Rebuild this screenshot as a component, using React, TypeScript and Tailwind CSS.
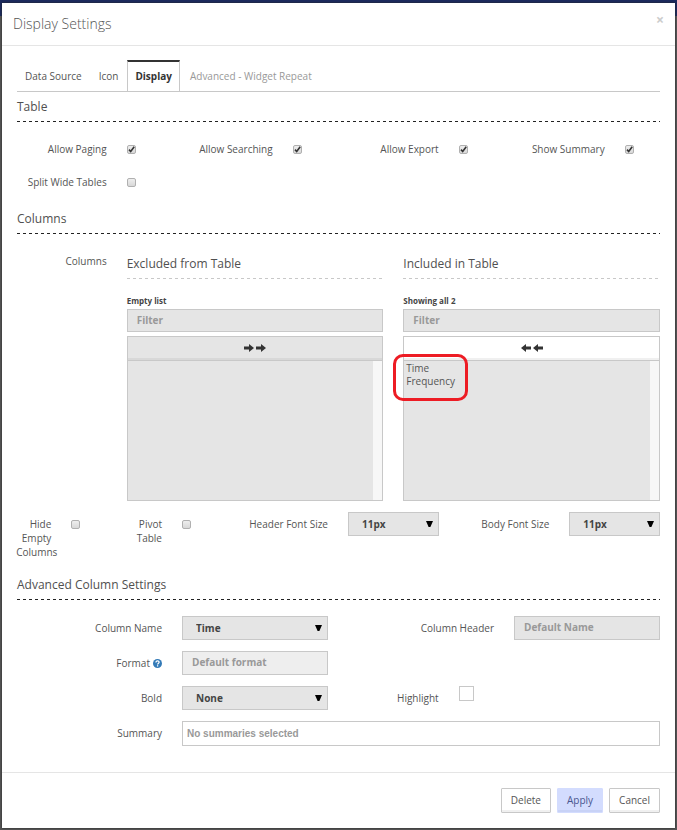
import { useId, useState } from "react";
import type { ReactNode } from "react";

const labelText = "text-[10px] leading-[14px] text-[#555]";
const control =
  "w-full appearance-none rounded-none border border-[#c8c8c8] text-[10px] font-bold outline-none";
const dashed = "bg-[length:6px_1px] bg-bottom-left bg-repeat-x pb-[5px] text-[12px] leading-5 text-[#505050]";

function Heading({ children }: { children: ReactNode }) {
  return (
    <h2 className={`bg-[linear-gradient(to_right,#222_50%,transparent_50%)] ${dashed}`}>
      {children}
    </h2>
  );
}

function Check({ id, on = false }: { id: string; on?: boolean }) {
  return (
    <span className="grid h-[14px] w-[9px] items-center">
      <input
        id={id}
        type="checkbox"
        defaultChecked={on}
        className="peer col-start-1 row-start-1 size-[9px] appearance-none rounded-[2px] border border-[#b0b0b0] bg-linear-to-b from-[#eee] to-[#d8d8d8]"
      />
      <svg
        viewBox="0 0 9 9"
        className="pointer-events-none invisible col-start-1 row-start-1 size-[9px] peer-checked:visible"
      >
        <path d="M2 4.6 3.7 6.5 7.2 1.8" fill="none" stroke="#333" strokeWidth="1.6" />
      </svg>
    </span>
  );
}

function CheckField({ label, on }: { label: string; on?: boolean }) {
  const id = useId();
  return (
    <div className="grid grid-cols-3">
      <label htmlFor={id} className={`col-span-2 whitespace-nowrap px-[10px] text-right ${labelText}`}>
        {label}
      </label>
      <div className="px-[10px]">
        <Check id={id} on={on} />
      </div>
    </div>
  );
}

function Picker({ id, options }: { id: string; options: string[] }) {
  return (
    <div className="grid items-center">
      <select id={id} className={`col-start-1 row-start-1 h-6 bg-[#e5e5e5] pl-[13px] pr-5 text-[#444] ${control}`}>
        {options.map((o) => (
          <option key={o}>{o}</option>
        ))}
      </select>
      <svg
        viewBox="0 0 7 6"
        className="pointer-events-none col-start-1 row-start-1 mr-[6px] h-[6px] w-[7px] justify-self-end"
      >
        <path d="M0 0h7L4.4 6H2.6z" fill="#000" />
      </svg>
    </div>
  );
}

function Arrow({ left = false }: { left?: boolean }) {
  return (
    <svg viewBox="0 0 10 8" className="h-2 w-[10px]">
      <path d={left ? "M0 4 5 0v2.4h5v3.2H5V8z" : "M10 4 5 0v2.4H0v3.2h5V8z"} fill="#333" />
    </svg>
  );
}

function DualList({
  title,
  info,
  items,
  left = false,
}: {
  title: string;
  info: string;
  items: string[];
  left?: boolean;
}) {
  return (
    <div>
      <h3 className={`bg-[linear-gradient(to_right,#c8c8c8_50%,transparent_50%)] ${dashed}`}>{title}</h3>
      <p className="mt-[15px] pb-px text-[8px] font-bold leading-[14px] text-[#444]">{info}</p>
      <input
        aria-label={`Filter ${title}`}
        placeholder="Filter"
        className={`block h-[23px] bg-[#e5e5e5] px-[9px] pb-px placeholder:text-[#999] ${control}`}
      />
      <button
        aria-label={left ? "Remove all" : "Move all"}
        className={`mt-1 flex h-6 w-full items-center justify-center gap-[2px] border border-b-0 border-[#c8c8c8] pb-[2px] ${
          left ? "bg-white shadow-[inset_0_-2px_0_#f0f0f0]" : "bg-[#e5e5e5] shadow-[inset_0_-2px_0_#d8d8d8]"
        }`}
      >
        <Arrow left={left} />
        <Arrow left={left} />
      </button>
      <div className="relative flex h-[141px] border border-[#c8c8c8] bg-[#e5e5e5]">
        <select
          multiple
          aria-label={title}
          className="min-w-0 flex-1 appearance-none overflow-hidden rounded-none bg-transparent text-[10px] text-[#555] outline-none"
        >
          {items.map((i) => (
            <option key={i} className="h-[13px] min-h-0 p-0 px-[2px] text-[10px] leading-[13px]">
              {i}
            </option>
          ))}
        </select>
        <div className="w-[9px] bg-[#f7f7f7]" />
        {left && (
          <div className="pointer-events-none absolute -left-[11px] -top-[7px] h-[47px] w-[75px] rounded-[10px] border-3 border-[#ed1c24]" />
        )}
      </div>
    </div>
  );
}

function Label({ id, className, children }: { id: string; className: string; children: ReactNode }) {
  return (
    <label htmlFor={id} className={`px-[10px] pt-[5px] text-right ${labelText} ${className}`}>
      {children}
    </label>
  );
}

export default function App() {
  const tabs = ["Data Source", "Icon", "Display", "Advanced - Widget Repeat"];
  const [active, setActive] = useState("Display");
  const button = "h-[25px] rounded-[1px] border px-[9px] pb-px text-[10px] leading-[14px]";

  return (
    <div className="min-h-screen bg-[#555] bg-linear-to-b from-[#1c2b5e] from-[16px] to-[#555] to-[16px] px-[2px] pb-[2px] pt-[3px] font-['Open_Sans','Noto_Sans',sans-serif]">
      <main role="dialog" aria-label="Display Settings" className="bg-white shadow-[0_0_2px_#222]">
        <header className="flex justify-between border-b border-[#e5e5e5] px-[11px] py-[11px]">
          <h1 className="text-sm font-light leading-5 text-[#555]">Display Settings</h1>
          <button aria-label="Close" className="h-[11px] text-[14px] font-bold leading-[11px] text-[#ccc]">
            ×
          </button>
        </header>

        <div className="px-[15px] pt-[14px]">
          <div role="tablist" className="flex h-8 gap-px border-b border-[#c8c8c8]">
            {tabs.map((t, i) => (
              <button
                key={t}
                role="tab"
                aria-selected={t === active}
                onClick={() => setActive(t)}
                className={`border-x border-t-2 px-[7px] pb-[2px] text-[10px] leading-[14px] ${
                  t === active
                    ? "border-x-[#c8c8c8] border-t-[#333] font-bold text-[#333]"
                    : i === 3
                      ? "border-transparent pl-2 text-[#999]"
                      : "border-transparent text-[#555]"
                }`}
              >
                {t}
              </button>
            ))}
          </div>

          <section className="pt-[5px]">
            <Heading>Table</Heading>
            <div className="-ml-[11px] -mr-[10px] grid grid-cols-4 gap-y-[19px] pb-[20px] pt-5">
              <CheckField label="Allow Paging" on />
              <CheckField label="Allow Searching" on />
              <CheckField label="Allow Export" on />
              <CheckField label="Show Summary" on />
              <CheckField label="Split Wide Tables" />
            </div>
          </section>

          <section>
            <Heading>Columns</Heading>
            <div className="-ml-[11px] -mr-[10px] grid grid-cols-12 pt-5">
              <div className={`col-span-2 px-[10px] text-right ${labelText}`}>Columns</div>
              <div className="col-span-10 grid grid-cols-2 gap-5 px-[10px]">
                <DualList title="Excluded from Table" info="Empty list" items={[]} />
                <DualList title="Included in Table" info="Showing all 2" items={["Time", "Frequency"]} left />
              </div>
            </div>
            <div className="-ml-[11px] -mr-[10px] grid grid-cols-12 pb-4 pt-[11px]">
              <label htmlFor="hide" className={`flex flex-col items-end px-[10px] pt-[5px] ${labelText}`}>
                <span>Hide</span>
                <span>Empty</span>
                <span className="-mr-[6px]">Columns</span>
              </label>
              <div className="px-[10px] pt-[5px]">
                <Check id="hide" />
              </div>
              <Label id="pivot" className="">Pivot Table</Label>
              <div className="px-[10px] pt-[5px]">
                <Check id="pivot" />
              </div>
              <Label id="hsize" className="col-span-2">Header Font Size</Label>
              <div className="col-span-2 px-[10px]">
                <Picker id="hsize" options={["11px", "12px", "14px"]} />
              </div>
              <Label id="bsize" className="col-span-2">Body Font Size</Label>
              <div className="col-span-2 px-[10px]">
                <Picker id="bsize" options={["11px", "12px", "14px"]} />
              </div>
            </div>
          </section>

          <section>
            <Heading>Advanced Column Settings</Heading>
            <div className="-ml-[11px] -mr-[10px] grid grid-cols-12 gap-y-[11px] pb-[26px] pt-4">
              <Label id="name" className="col-span-3">Column Name</Label>
              <div className="col-span-3 px-[10px]">
                <Picker id="name" options={["Time", "Frequency"]} />
              </div>
              <Label id="header" className="col-span-3">Column Header</Label>
              <div className="col-span-3 px-[10px]">
                <input id="header" placeholder="Default Name" className={`block h-6 bg-[#e5e5e5] px-[9px] pb-[2px] placeholder:text-[#999] ${control}`} />
              </div>

              <Label id="format" className="col-span-3">
                Format
                <svg viewBox="0 0 10 10" className="ml-[3px] inline size-[9px] align-[-1px]">
                  <circle cx="5" cy="5" r="5" fill="#337ab7" />
                  <path d="M3.3 3.8C3.3 1.6 6.8 1.7 6.8 3.7 6.8 4.9 5.1 4.9 5.1 6M5.1 6.9v1.4" fill="none" stroke="#fff" strokeWidth="1.4" />
                </svg>
              </Label>
              <div className="col-span-9 grid grid-cols-3">
                <div className="px-[10px]">
                  <input id="format" placeholder="Default format" className={`block h-6 bg-[#eee] px-[9px] pb-[2px] placeholder:text-[#999] ${control}`} />
                </div>
              </div>

              <Label id="bold" className="col-span-3">Bold</Label>
              <div className="col-span-3 px-[10px]">
                <Picker id="bold" options={["None", "All"]} />
              </div>
              <Label id="highlight" className="col-span-2">Highlight</Label>
              <div className="col-span-4 px-[10px]">
                <button id="highlight" aria-label="Highlight" className="block size-[15px] border border-[#c8c8c8] bg-white" />
              </div>

              <Label id="summary" className="col-span-3">Summary</Label>
              <div className="col-span-9 px-[10px]">
                <input
                  id="summary"
                  placeholder="No summaries selected"
                  className="block h-[25px] w-full border border-[#c8c8c8] bg-white px-1 font-['Liberation_Sans',Arial,sans-serif] text-[10px] font-bold outline-none placeholder:text-[#999]"
                />
              </div>
            </div>
          </section>
        </div>

        <footer className="flex justify-end gap-[6px] border-t border-[#e5e5e5] px-[15px] py-[15px]">
          <button className={`${button} border-[#c8c8c8] bg-white text-[#555] shadow-[inset_0_-2px_0_#f0f0f0]`}>Delete</button>
          <button className={`${button} border-[#d3dcfe] bg-[#d3dcfe] text-[#4a5690] shadow-[inset_0_-2px_0_#c8d2f6]`}>Apply</button>
          <button className={`${button} border-[#c8c8c8] bg-white text-[#555] shadow-[inset_0_-2px_0_#f0f0f0]`}>Cancel</button>
        </footer>
      </main>
    </div>
  );
}
